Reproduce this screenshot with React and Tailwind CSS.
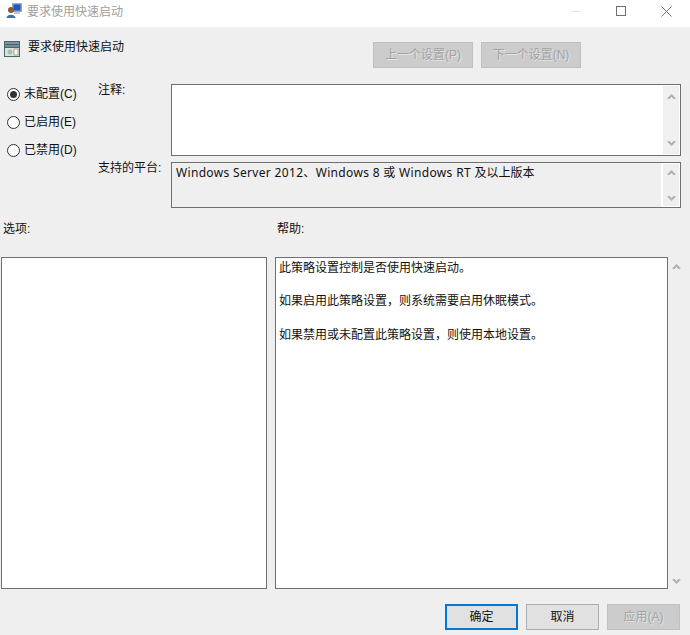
function Chevron({ up }) {
    return (
        <svg width="9" height="5" viewBox="0 0 9 5">
            <path d={up ? "M1 5 L4.5 1.5 L8 5" : "M1 0 L4.5 3.5 L8 0"} fill="none" stroke="#b0b0b0" strokeWidth="2" />
        </svg>
    )
}

function ScrollBar({ className }) {
    return (
        <div className={`flex flex-col items-center justify-between ${className}`}>
            <Chevron up />
            <Chevron />
        </div>
    )
}

function Radio({ label, checked }) {
    return (
        <div className="flex h-7 items-center">
            <div className="flex h-[13px] w-[13px] items-center justify-center rounded-full border border-[#333] bg-white">
                {checked && <div className="h-[7px] w-[7px] rounded-full bg-[#333]"></div>}
            </div>
            <span className="ml-1 text-[12px] text-[#111]">{label}</span>
        </div>
    )
}

function FootButton({ children, className }) {
    return (
        <button className={`flex h-[26px] w-[73px] items-center justify-center text-[12px] ${className}`}>
            {children}
        </button>
    )
}

export default function App() {
    return (
        <div className="flex h-[635px] w-[690px] flex-col overflow-hidden bg-[#efefef] font-['Liberation_Sans','Noto_Sans_CJK_SC',sans-serif] text-[#111]">
            <div className="flex h-[27px] items-center bg-white pb-[5px] pl-[6px]">
                <svg width="17" height="16" viewBox="0 0 17 16">
                    <rect x="6" y="0" width="10" height="9" fill="#9aa5b5" />
                    <rect x="7.5" y="1.5" width="7" height="6" fill="#1d55c4" />
                    <rect x="8" y="9" width="6" height="2" fill="#c0c6d0" />
                    <circle cx="5" cy="7" r="3" fill="#8a5a35" />
                    <path d="M0.5 15 C0.5 10.5 9.5 10.5 9.5 15 Z" fill="#3d72a8" />
                </svg>
                <span className="ml-1 mt-px text-[12px] text-[#a0a0a0]">要求使用快速启动</span>
                <div className="ml-auto flex items-center">
                    <div className="mr-[35px] h-px w-[10px] bg-[#e3e3e3]"></div>
                    <div className="mr-[35px] h-[10px] w-[10px] border border-[#707070]"></div>
                    <svg width="11" height="11" viewBox="0 0 11 11" className="mr-[18px]">
                        <path d="M0.5 0.5 L10.5 10.5 M10.5 0.5 L0.5 10.5" stroke="#707070" strokeWidth="1" />
                    </svg>
                </div>
            </div>

            <div className="flex h-[57px] pl-1">
                <svg width="16" height="16" viewBox="0 0 16 16" className="mt-[14px]">
                    <rect width="16" height="16" fill="#3f6b70" />
                    <rect x="1" y="1" width="14" height="2" fill="#8d8aa0" />
                    <rect x="1" y="4" width="14" height="2" fill="#6d8f96" />
                    <rect x="1" y="7" width="14" height="8" fill="#dfe3d8" />
                    <circle cx="6" cy="11" r="2.5" fill="#aebab6" />
                    <rect x="10" y="8" width="4" height="6" fill="#f7f7ef" stroke="#667" strokeWidth="0.5" />
                </svg>
                <span className="ml-2 mt-[11px] text-[12px]">要求使用快速启动</span>
                <div className="ml-[249px] mt-[15px] flex gap-2">
                    <div className="flex h-[26px] w-[100px] items-center justify-center border border-[#bfbfbf] bg-[#cccccc] text-[12px] text-[#a3a3a3] [text-shadow:1px_1px_0_#e4e4e4]">上一个设置(P)</div>
                    <div className="flex h-[26px] w-[100px] items-center justify-center border border-[#bfbfbf] bg-[#cccccc] text-[12px] text-[#a3a3a3] [text-shadow:1px_1px_0_#e4e4e4]">下一个设置(N)</div>
                </div>
            </div>

            <div className="flex h-[124px]">
                <div className="-mt-1 ml-[7px] w-[91px]">
                    <Radio label="未配置(C)" checked />
                    <Radio label="已启用(E)" />
                    <Radio label="已禁用(D)" />
                </div>
                <div className="-mt-[3px] w-[73px] text-[12px]">
                    <div>注释:</div>
                    <div className="mt-[60px]">支持的平台:</div>
                </div>
                <div className="flex w-[510px] flex-col gap-[6px]">
                    <div className="flex h-[72px] justify-end border border-[#707070] bg-white p-px">
                        <ScrollBar className="w-4 bg-[#f0f0f0] pb-[8px] pt-[8px]" />
                    </div>
                    <div className="flex h-[46px] border border-[#707070]">
                        <div className="flex-1 px-1 pt-px text-[12px] font-['Noto_Sans','Noto_Sans_CJK_SC',sans-serif]">
                            <span className="tracking-[0.33px]">Windows Server 2012、Windows 8 或 Windows RT </span>及以上版本
                        </div>
                        <ScrollBar className="w-[19px] border-b border-l-2 border-r border-t border-white bg-[#efefef] pb-[5px] pt-[6px]" />
                    </div>
                </div>
            </div>

            <div className="mt-[12px] flex h-[37px] text-[12px]">
                <div className="ml-[3px] w-[274px]">选项:</div>
                <div>帮助:</div>
            </div>

            <div className="ml-px flex h-[332px]">
                <div className="w-[266px] border border-[#707070] bg-white"></div>
                <div className="ml-2 flex w-[410px]">
                    <div className="w-[393px] border border-[#707070] bg-white px-[3px] pt-[2px] text-[12px] leading-[17px]">
                        <p>此策略设置控制是否使用快速启动。</p>
                        <p className="mt-[16px]">如果启用此策略设置，则系统需要启用休眠模式。</p>
                        <p className="mt-[17px]">如果禁用或未配置此策略设置，则使用本地设置。</p>
                    </div>
                    <ScrollBar className="w-[17px] pb-[5px] pt-[7px]" />
                </div>
            </div>

            <div className="mr-[10px] mt-[15px] flex justify-end gap-2">
                <FootButton className="border-2 border-[#0078d7] bg-[#e1e1e1]">确定</FootButton>
                <FootButton className="border border-[#adadad] bg-[#e1e1e1]">取消</FootButton>
                <FootButton className="border border-[#bfbfbf] bg-[#cccccc] text-[#a3a3a3] [text-shadow:1px_1px_0_#e4e4e4]">应用(A)</FootButton>
            </div>
        </div>
    )
}
